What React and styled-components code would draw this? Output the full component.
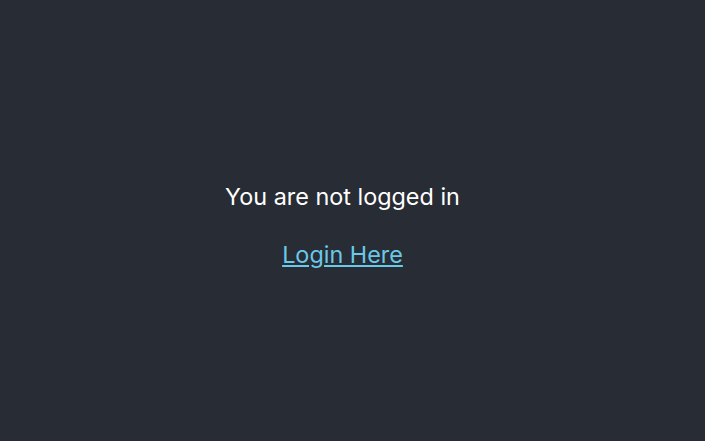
import React from 'react'
import styled, { createGlobalStyle } from 'styled-components'

const GlobalStyle = createGlobalStyle`
html, body { margin: 0; padding: 0; background: #282c34; }
`

const Header = styled.header`
background-color: #282c34;
min-height: 100vh;
box-sizing: border-box;
padding: 10px 20px 0 0;
display: flex;
flex-direction: column;
align-items: center;
justify-content: center;
font-family: Inter, "Noto Sans", sans-serif;
font-size: 23.4px;
color: #fff;
`

const Message = styled.p`
margin: 0 0 29px;
`

const LoginLink = styled.a`
color: #6ac8e8;
`

export default function App() {
    return (
        <>
            <GlobalStyle />
            <Header>
                <Message>You are not logged in</Message>
                <LoginLink href="#">Login Here</LoginLink>
            </Header>
        </>
    )
}
